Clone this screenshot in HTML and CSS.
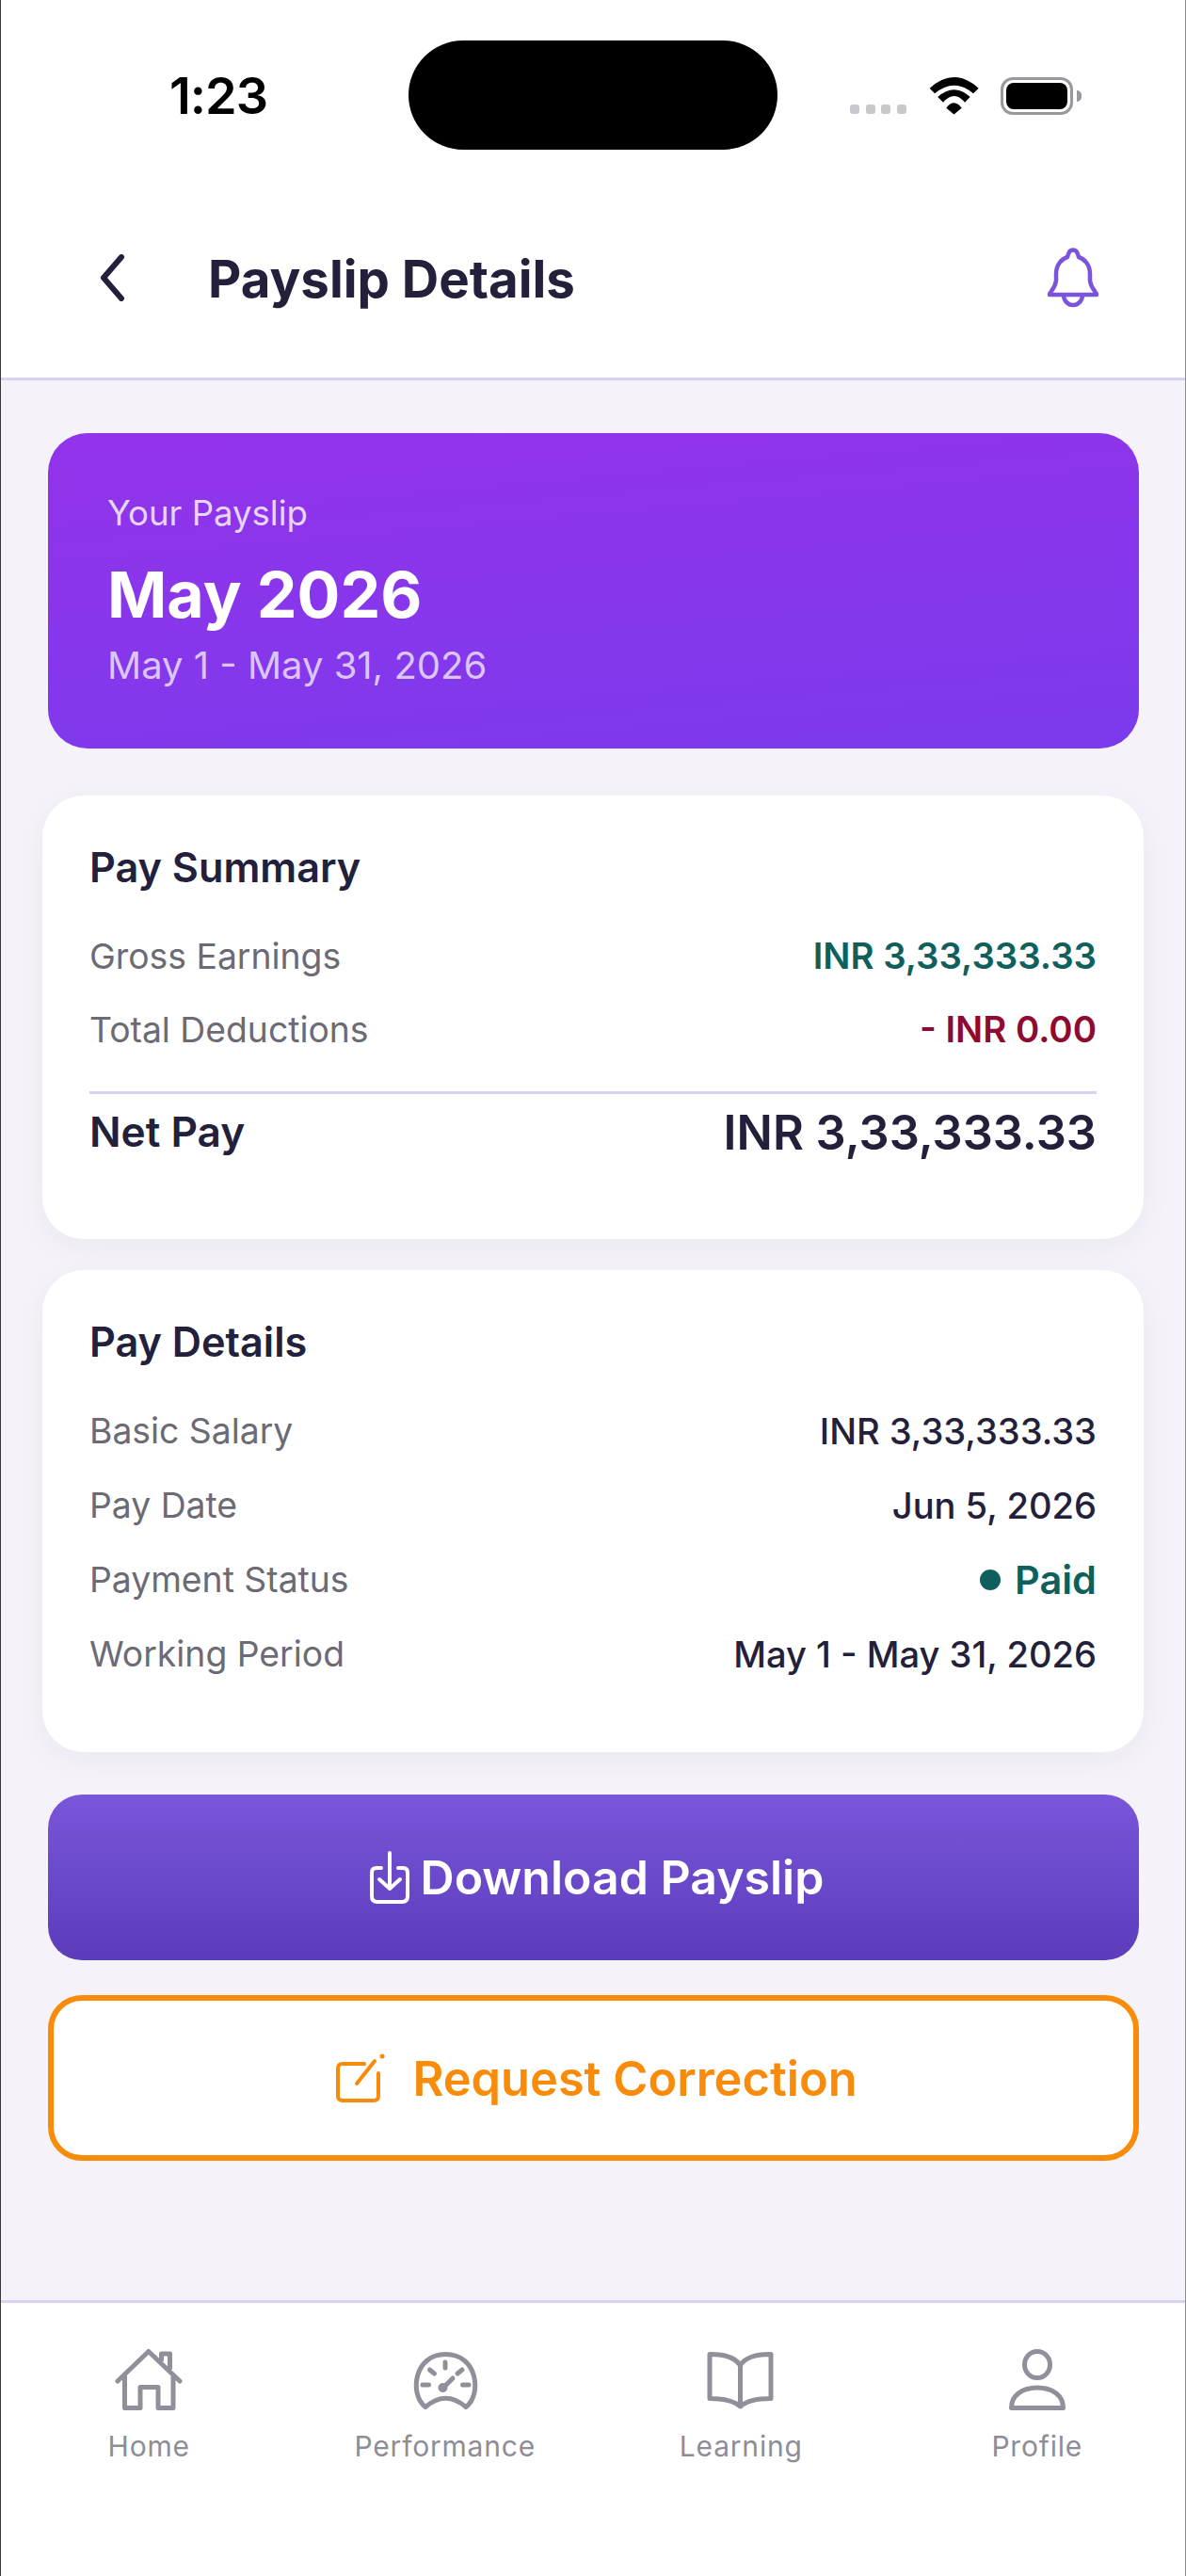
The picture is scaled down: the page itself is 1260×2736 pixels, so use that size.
FILE: index.html
```html
<!DOCTYPE html>
<html lang="en">
<head>
    <meta charset="UTF-8">
    <meta name="viewport" content="width=device-width, initial-scale=1.0">
    <title>Payslip Details</title>
    <link rel="stylesheet" href="styles.css">
</head>
<body>
    <div class="page">
        <div class="status-bar">
            <span class="time">1:23</span>
            <div class="island"></div>
            <div class="status-icons">
                <div class="cell-dots"><i></i><i></i><i></i><i></i></div>
                <svg class="wifi" width="53" height="40" viewBox="0 0 53 40">
                    <path d="M0.7 11.7Q26.5 -11.7 52.7 11.7L47 17.3Q26.5 0 6 17.3Z"/>
                    <path d="M9.3 21Q26.5 5.6 43.7 21L38 26.7Q26.5 13.3 15 26.7Z"/>
                    <path d="M18.3 32.7Q26.5 22 34.7 32.7L26.5 39.5Z"/>
                </svg>
                <div class="battery"><div class="battery-fill"></div></div>
            </div>
        </div>

        <header class="app-header">
            <svg class="back" width="28" height="50" viewBox="0 0 28 50">
                <path d="M24 3L5 25L24 47"/>
            </svg>
            <h1>Payslip Details</h1>
            <svg class="bell" width="56" height="64" viewBox="0 0 56 64">
                <path d="M3 50C3 47 9 44 10 35V28C10 18 16 12 22 10C23 5 25 2.5 28 2.5C31 2.5 33 5 34 10C40 12 46 18 46 28V35C47 44 53 47 53 50Z"/>
                <path d="M18 50C18 57 23 61 28 61C33 61 38 57 38 50"/>
            </svg>
        </header>

        <main class="content">
            <section class="hero">
                <div class="hero-label">Your Payslip</div>
                <div class="hero-month">May 2026</div>
                <div class="hero-range">May 1 - May 31, 2026</div>
            </section>

            <section class="card summary">
                <h2>Pay Summary</h2>
                <div class="row">
                    <span class="label">Gross Earnings</span>
                    <span class="value green">INR 3,33,333.33</span>
                </div>
                <div class="row">
                    <span class="label">Total Deductions</span>
                    <span class="value red">- INR 0.00</span>
                </div>
                <div class="row net">
                    <span class="net-label">Net Pay</span>
                    <span class="net-value">INR 3,33,333.33</span>
                </div>
            </section>

            <section class="card details">
                <h2>Pay Details</h2>
                <div class="row">
                    <span class="label">Basic Salary</span>
                    <span class="value">INR 3,33,333.33</span>
                </div>
                <div class="row">
                    <span class="label">Pay Date</span>
                    <span class="value">Jun 5, 2026</span>
                </div>
                <div class="row">
                    <span class="label">Payment Status</span>
                    <span class="paid"><i class="paid-dot"></i>Paid</span>
                </div>
                <div class="row">
                    <span class="label">Working Period</span>
                    <span class="value">May 1 - May 31, 2026</span>
                </div>
            </section>

            <button class="btn btn-download" type="button">
                <svg width="42" height="56" viewBox="0 0 42 56">
                    <path d="M12 18H7Q2 18 2 23V48Q2 54 8 54H34Q40 54 40 48V23Q40 18 35 18H30"/>
                    <path d="M21 2V40M10 30L21 40L32 30"/>
                </svg>
                Download Payslip
            </button>

            <button class="btn btn-correction" type="button">
                <svg width="52" height="52" viewBox="0 0 52 52">
                    <path d="M30 11H7Q2 11 2 16V45Q2 50 7 50H40Q45 50 45 45V21"/>
                    <path d="M22 32L41 8"/>
                    <circle cx="49" cy="3" r="2.5" class="pen-tip"/>
                </svg>
                Request Correction
            </button>
        </main>

        <nav class="tab-bar">
            <div class="tab">
                <svg width="72" height="72" viewBox="0 0 72 72">
                    <path d="M3 37L35.8 5.5L69 37"/>
                    <path d="M49.5 14V8H58.5V23"/>
                    <path d="M10.5 31V65.5H27V43.5H46V65.5H62V31"/>
                </svg>
                <span>Home</span>
            </div>
            <div class="tab">
                <svg width="72" height="72" viewBox="0 0 72 72">
                    <path d="M15 64.5C-2 52 2 8.5 36.5 8.5C71 8.5 75 52 58 64.5Q36.5 46 15 64.5Z"/>
                    <path d="M36 17V23M19.5 25L24.5 29M54 25L49 29M12 41H18.5M54.5 41H61"/>
                    <path d="M34 44L44 34"/>
                    <circle cx="33.5" cy="44" r="2.5" class="needle-hub"/>
                </svg>
                <span>Performance</span>
            </div>
            <div class="tab">
                <svg width="72" height="72" viewBox="0 0 72 72">
                    <path d="M35.5 20C30 12 18 8.5 5 8.5H3V55.5C16 55.5 28 57 35.5 64C43 57 55 55.5 68 55.5V8.5H66C53 8.5 41 12 35.5 20ZM35.5 20V64"/>
                </svg>
                <span>Learning</span>
            </div>
            <div class="tab">
                <svg width="72" height="72" viewBox="0 0 72 72">
                    <ellipse cx="36" cy="19.5" rx="13.5" ry="14"/>
                    <path d="M8.5 65.5C8.5 52 20 44 36 44C52 44 63.5 52 63.5 65.5Z"/>
                </svg>
                <span>Profile</span>
            </div>
        </nav>
    </div>
</body>
</html>
```

FILE: styles.css
```css
* {
    box-sizing: border-box;
}

body {
    margin: 0;
    font-family: 'Inter', 'Liberation Sans', sans-serif;
    color: #22203a;
    background: #fff;
}

.page {
    width: 1260px;
    height: 2736px;
    display: flex;
    flex-direction: column;
    border-left: 1px solid #3a3a3a;
    border-right: 1px solid #8a8a8a;
    overflow: hidden;
}

/* status bar */
.status-bar {
    height: 200px;
    position: relative;
    flex-shrink: 0;
}

.time {
    position: absolute;
    left: 179px;
    top: 70px;
    font-size: 54px;
    line-height: 64px;
    font-weight: 600;
    color: #000;
    letter-spacing: -1px;
}

.island {
    position: absolute;
    left: 433px;
    top: 43px;
    width: 392px;
    height: 116px;
    background: #000;
    border-radius: 58px;
}

.status-icons {
    position: absolute;
    left: 902px;
    top: 82px;
    height: 40px;
    display: flex;
    align-items: flex-end;
}

.cell-dots {
    display: flex;
    gap: 6.7px;
    margin-bottom: 1px;
    margin-right: 24px;
}

.cell-dots i {
    width: 10px;
    height: 10px;
    border-radius: 3px;
    background: #c8c8cc;
}

.wifi path {
    fill: #000;
}

.battery {
    width: 77px;
    height: 40px;
    margin-left: 23px;
    padding: 3px;
    border: 3px solid #98989e;
    border-radius: 13px;
    position: relative;
    background: #fff;
}

.battery:after {
    content: '';
    position: absolute;
    right: -12px;
    top: 11px;
    width: 5px;
    height: 12px;
    background: #98989e;
    border-radius: 0 6px 6px 0;
}

.battery-fill {
    width: 100%;
    height: 100%;
    background: #000;
    border-radius: 8px;
}

/* header */
.app-header {
    height: 207px;
    margin-top: -3px;
    display: flex;
    align-items: center;
    flex-shrink: 0;
    padding: 0 0 8px 104px;
    background: #fff;
    border-bottom: 3px solid #d9d0f5;
}

.app-header h1 {
    margin: 1px 0 0 88px;
    font-size: 54.6px;
    font-weight: 700;
    line-height: 64px;
    flex: 1;
}

.back path {
    fill: none;
    stroke: #22203a;
    stroke-width: 6;
    stroke-linecap: round;
    stroke-linejoin: round;
}

.bell {
    margin-right: 91px;
}

.bell path {
    fill: none;
    stroke: #7a55dc;
    stroke-width: 4.5;
    stroke-linejoin: round;
}

/* main area */
.content {
    flex: 1;
    padding: 56px 44px 0 44px;
    background: #f5f2f9;
}

.hero {
    height: 335px;
    margin: 0 5px 50px 6px;
    padding: 63px 63px 0;
    border-radius: 42px;
    background: linear-gradient(175deg, #9333ea 0%, #7c3aed 100%);
    color: #fff;
}

.hero-label {
    font-size: 36.6px;
    line-height: 44px;
    color: #e7d6fb;
}

.hero-month {
    margin-top: 24px;
    font-size: 68px;
    font-weight: 700;
    line-height: 80px;
}

.hero-range {
    margin-top: 13px;
    font-size: 40px;
    line-height: 46px;
    color: #dcc5fa;
}

.card {
    padding: 51px 50px 0 50px;
    background: #fff;
    border-radius: 44px;
    box-shadow: 0 8px 32px rgba(60, 40, 100, 0.05);
}

.card h2 {
    margin: 0 0 30px;
    font-size: 43.2px;
    font-weight: 600;
    line-height: 50px;
}

.row {
    display: flex;
    justify-content: space-between;
    align-items: center;
    height: 78px;
}

.summary {
    height: 471px;
    margin-bottom: 33px;
}

.details {
    height: 512px;
    margin-bottom: 45px;
}

.details .row {
    height: 79px;
}

.label {
    font-size: 37.3px;
    color: #6b6a75;
}

.value {
    font-size: 38.1px;
    font-weight: 500;
    color: #22203a;
}

.green {
    color: #0f5f5c;
    font-size: 38.4px;
    font-weight: 600;
}

.red {
    color: #8e0a30;
    font-size: 38.4px;
    font-weight: 600;
}

.row.net {
    height: 83px;
    margin-top: 27px;
    border-top: 3px solid #d9d0f5;
}

.net-label {
    font-size: 44.2px;
    font-weight: 600;
}

.net-value {
    font-size: 50.5px;
    font-weight: 600;
}

.paid {
    display: flex;
    align-items: center;
    gap: 15px;
    font-size: 41.5px;
    font-weight: 600;
    color: #0f5f5c;
}

.paid-dot {
    width: 22px;
    height: 22px;
    border-radius: 50%;
    background: #0f5f5c;
}

/* buttons */
.btn {
    display: flex;
    align-items: center;
    justify-content: center;
    width: 1159px;
    height: 176px;
    margin-left: 6px;
    padding: 0 0 0 7px;
    font-family: inherit;
    font-size: 50px;
    font-weight: 600;
    border-radius: 36px;
    cursor: pointer;
}

.btn svg path {
    fill: none;
    stroke-linecap: round;
    stroke-linejoin: round;
    stroke-width: 4;
}

.btn-download {
    gap: 12px;
    margin-bottom: 37px;
    border: none;
    color: #fff;
    background: linear-gradient(180deg, #7a56da 0%, #5b3cbb 100%);
}

.btn-download svg path {
    stroke: #fff;
}

.btn-correction {
    gap: 29px;
    border: 6px solid #f98b0a;
    color: #f98b0a;
    background: #fff;
    font-size: 50.5px;
}

.btn-correction svg path {
    stroke: #f98b0a;
}

.pen-tip {
    fill: #f98b0a;
}

/* bottom tabs */
.tab-bar {
    height: 293px;
    flex-shrink: 0;
    padding-top: 46px;
    display: grid;
    grid-template-columns: repeat(4, 1fr);
    border-top: 3px solid #d9d0f5;
    background: #fff;
}

.tab {
    display: flex;
    flex-direction: column;
    align-items: center;
}

.tab svg {
    fill: none;
    stroke: #918f99;
    stroke-width: 5;
    stroke-linecap: round;
    stroke-linejoin: round;
}

.needle-hub {
    fill: #918f99;
}

.tab span {
    margin-top: 16px;
    font-size: 30px;
    line-height: 36px;
    color: #8e8c96;
    letter-spacing: 0.8px;
}
```
